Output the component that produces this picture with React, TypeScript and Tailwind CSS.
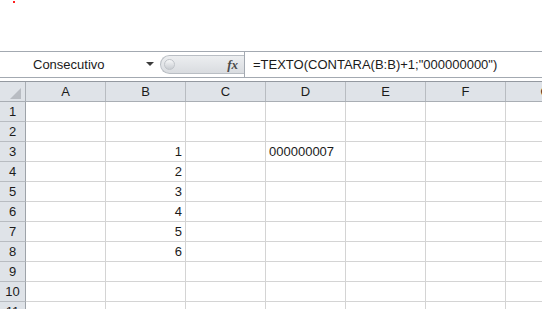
import React from "react";

const cols = ["A", "B", "C", "D", "E", "F", "G"];
const rows = Array.from({ length: 11 }, (_, i) => i + 1);

const cellValue = (r: number, c: string): { v: string; right: boolean } | null => {
  if (c === "B" && r >= 3 && r <= 8) return { v: String(r - 2), right: true };
  if (c === "D" && r === 3) return { v: "000000007", right: false };
  return null;
};

export default function App() {
  return (
    <div
      className="w-[542px] h-[309px] overflow-hidden bg-white text-[#1b1b1b]"
      style={{ fontFamily: '"Liberation Sans", Arial, sans-serif' }}
    >
      {/* top empty area */}
      <div className="h-[51px] pl-[13px] pt-[1px]">
        <div className="w-[2px] h-[2px] bg-[#ff2020]" />
      </div>

      {/* formula bar */}
      <div className="h-[27px] border-t border-b border-[#a3a9b1] flex bg-white">
        <div className="w-[160px] flex items-center pl-[33px] pr-[6px]">
          <span className="text-[13px] leading-none flex-1">Consecutivo</span>
          <svg width="8" height="4" viewBox="0 0 8 4" className="mb-[1px]">
            <path d="M0 0 L8 0 L4 4 Z" fill="#3c3c3c" />
          </svg>
        </div>
        <div className="w-[84px] my-[3px] rounded-l-full bg-gradient-to-b from-[#eceef0] to-[#d9dce0] border border-r-0 border-[#b9bec4] flex items-center pl-[3px]">
          <div className="w-[11px] h-[11px] rounded-full bg-gradient-to-b from-[#f6f7f8] to-[#c9cdd2] border border-[#c0c4c9]" />
          <div className="flex-1" />
          <span
            className="text-[13px] italic font-bold text-[#4a4a4a] pr-[6px] leading-none"
            style={{ fontFamily: '"Liberation Serif", "Times New Roman", serif' }}
          >
            fx
          </span>
        </div>
        <div className="flex-1 border-l border-[#a3a9b1] flex items-center pl-[8px]">
          <span className="text-[13px] leading-none whitespace-nowrap">
            =TEXTO(CONTARA(B:B)+1;"000000000")
          </span>
        </div>
      </div>

      <div className="h-[3px] bg-white" />

      {/* column headers */}
      <div className="flex h-[21px] bg-[#dfe3e8] border-t border-b border-t-[#9499a0] border-b-[#a9aeb4]">
        <div className="w-[26px] shrink-0 border-r border-[#a9aeb4] relative">
          <svg className="absolute left-[10px] top-[6px]" width="11" height="11" viewBox="0 0 11 11">
            <path d="M11 0 L11 11 L0 11 Z" fill="#b8bcc2" />
          </svg>
        </div>
        {cols.map((c) => (
          <div
            key={c}
            className="w-[80px] shrink-0 border-r border-[#b8bcc1] flex items-center justify-center text-[13px]"
          >
            {c}
          </div>
        ))}
      </div>

      {/* rows */}
      {rows.map((r) => (
        <div key={r} className="flex h-[20px]">
          <div className="w-[26px] shrink-0 bg-[#dfe3e8] border-r border-b border-r-[#9ea3a9] border-b-[#b8bcc1] flex items-center justify-center text-[13px]">
            {r}
          </div>
          {cols.map((c) => {
            const cv = cellValue(r, c);
            return (
              <div
                key={c}
                className={`w-[80px] shrink-0 border-r border-b border-[#d4d4d4] flex items-center px-[3px] text-[13px] ${
                  cv && cv.right ? "justify-end" : "justify-start"
                }`}
              >
                {cv ? cv.v : ""}
              </div>
            );
          })}
        </div>
      ))}
    </div>
  );
}
